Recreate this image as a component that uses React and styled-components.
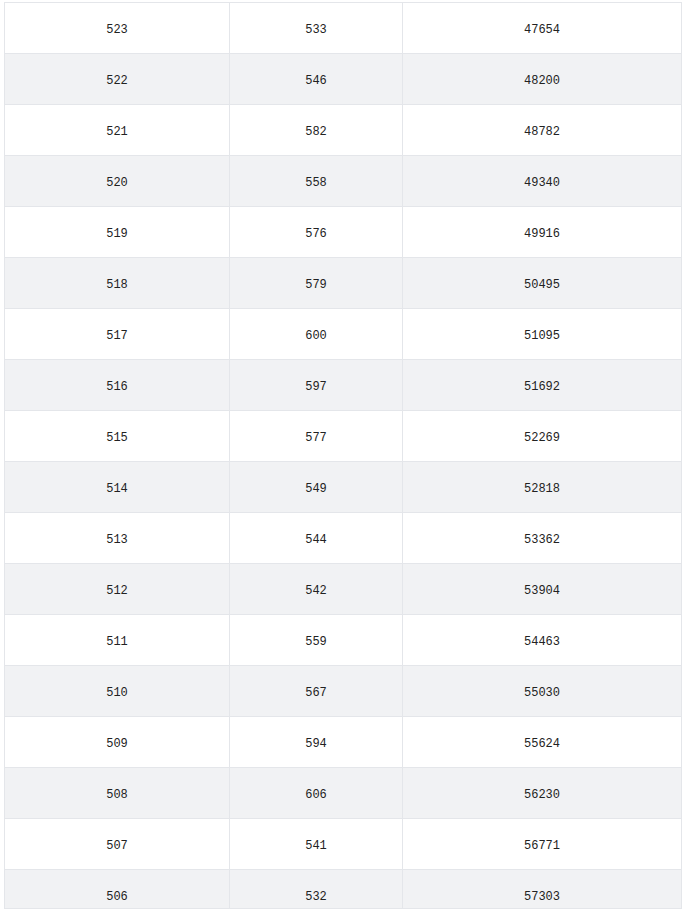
import React from 'react'
import styled, { createGlobalStyle } from 'styled-components'

const GlobalStyle = createGlobalStyle`
	html, body {
		margin: 0;
		padding: 0;
		background: #ffffff;
	}
	* {
		box-sizing: border-box;
	}
`

const rows = [
	[523, 533, 47654],
	[522, 546, 48200],
	[521, 582, 48782],
	[520, 558, 49340],
	[519, 576, 49916],
	[518, 579, 50495],
	[517, 600, 51095],
	[516, 597, 51692],
	[515, 577, 52269],
	[514, 549, 52818],
	[513, 544, 53362],
	[512, 542, 53904],
	[511, 559, 54463],
	[510, 567, 55030],
	[509, 594, 55624],
	[508, 606, 56230],
	[507, 541, 56771],
	[506, 532, 57303],
]

const TableFrame = styled.div`
	margin: 2px 0 0 4px;
	width: 678px;
	height: 907px;
	border: 1px solid #e4e6ea;
	overflow: hidden;
	background: #ffffff;
`

const Row = styled.div`
	display: grid;
	grid-template-columns: 225px 173px 1fr;
	height: 51px;
	border-bottom: 1px solid #e4e6ea;
	background: ${props => (props.striped ? '#f1f2f4' : '#ffffff')};
`

const Cell = styled.div`
	display: flex;
	align-items: center;
	justify-content: center;
	padding-top: 3px;
	font-family: 'Liberation Mono', 'DejaVu Sans Mono', monospace;
	font-size: 12px;
	color: #222222;
	border-right: ${props => (props.last ? 'none' : '1px solid #e4e6ea')};
`

const App = () => (
	<>
		<GlobalStyle />
		<TableFrame>
			{rows.map((row, i) => (
				<Row key={row[0]} striped={i % 2 === 1}>
					<Cell>{row[0]}</Cell>
					<Cell>{row[1]}</Cell>
					<Cell last>{row[2]}</Cell>
				</Row>
			))}
		</TableFrame>
	</>
)

export default App
